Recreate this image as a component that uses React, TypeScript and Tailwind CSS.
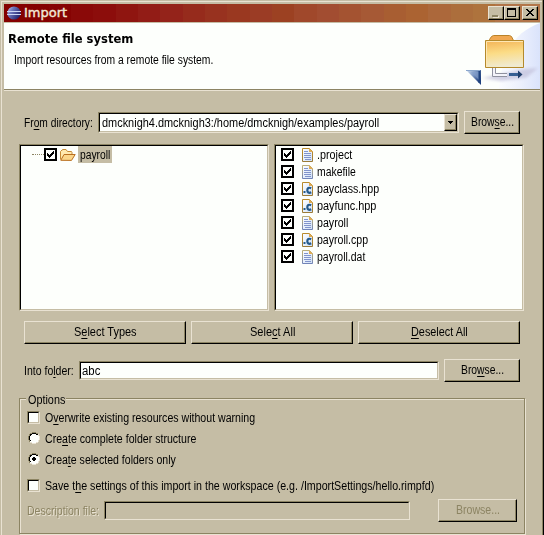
import { useLayoutEffect, useRef, type ReactNode } from "react";

const raised =
  "border border-t-[#e9e2d2] border-l-[#e9e2d2] border-r-black border-b-black shadow-[inset_-1px_-1px_0_#8c8463]";
const sunken =
  "border border-t-[#8c8463] border-l-[#8c8463] border-r-[#e9e2d2] border-b-[#e9e2d2]";
const sunkenInner =
  "h-full w-full border border-t-black border-l-black border-r-[#c5bda5] border-b-[#c5bda5]";

/** Single line of text, condensed to the given width. */
function Text({ w, className = "", children }: { w: number; className?: string; children: ReactNode }) {
  const ref = useRef<HTMLSpanElement>(null);
  useLayoutEffect(() => {
    const el = ref.current;
    if (el) el.style.transform = `scaleX(${w / el.offsetWidth})`;
  }, [w]);
  return (
    <span className={`block shrink-0 whitespace-nowrap ${className}`} style={{ width: w }}>
      <span ref={ref} className="inline-block origin-left">
        {children}
      </span>
    </span>
  );
}

function U({ children }: { children: ReactNode }) {
  return <span className="underline decoration-1 underline-offset-[2px]">{children}</span>;
}

function Button({ className, w, children }: { className: string; w: number; children: ReactNode }) {
  return (
    <button className={`flex h-[23px] shrink-0 items-center justify-center pb-px ${raised} ${className}`}>
      <Text w={w}>{children}</Text>
    </button>
  );
}

function Tick() {
  return (
    <svg className="shrink-0" width="13" height="13" viewBox="0 0 13 13" shapeRendering="crispEdges">
      <rect width="13" height="13" fill="#000" />
      <rect x="2" y="2" width="9" height="9" fill="#fdfffc" />
      <path d="M3 5h1v1h1v1h1V6h1V5h1V4h1V3h1v3H9v1H8v1H7v1H6v1H5V9H4V8H3z" fill="#000" />
    </svg>
  );
}

function Checkbox() {
  return (
    <span className={`block h-[13px] w-[13px] shrink-0 ${sunken}`}>
      <span className={`block bg-[#fdfffc] ${sunkenInner}`} />
    </span>
  );
}

function Radio({ on = false }: { on?: boolean }) {
  return (
    <svg className="shrink-0" width="12" height="12" viewBox="0 0 12 12" shapeRendering="crispEdges">
      <path d="M4 1h4v1h2v2h1v4h-1v2H8v1H4v-1H2V8H1V4h1V2h2z" fill="#fdfffc" />
      <path d="M4 0h4v1H4zM2 1h2v1H2zM8 1h2v1H8zM1 2h1v2H1zM0 4h1v4H0zM1 8h1v2H1z" fill="#8c8463" />
      <path d="M4 1h4v1H4zM2 2h2v1H2zM8 2h2v1H8zM2 3h1v1H2zM1 4h1v4H1zM2 8h1v1H2z" fill="#000" />
      <path d="M10 2h1v2h-1zM11 4h1v4h-1zM10 8h1v2h-1zM8 10h2v1H8zM4 11h4v1H4zM2 10h2v1H2z" fill="#e9e2d2" />
      {on && <path d="M5 4h2v1h1v2H7v1H5V7H4V5h1z" fill="#000" />}
    </svg>
  );
}

function FileIcon({ kind }: { kind: string }) {
  const edge = kind === "text" ? "#b9ad79" : "#b98b2d";
  const foot = kind === "text" ? "#7184b8" : "#9b7b37";
  return (
    <svg className="shrink-0" width="12" height="14" viewBox="0 0 12 14">
      <defs>
        <linearGradient id="page" x1="0" y1="0" x2="1" y2="1">
          <stop offset="0.1" stopColor="#fafcff" />
          <stop offset="1" stopColor="#cfe0f6" />
        </linearGradient>
        <linearGradient id={`edge-${kind}`} x1="0" y1="0" x2="0" y2="1">
          <stop offset="0.2" stopColor={edge} />
          <stop offset="1" stopColor={foot} />
        </linearGradient>
      </defs>
      <path d="M.5.5h7l3 3v10H.5z" fill="url(#page)" stroke={`url(#edge-${kind})`} />
      <path d="M7 0l4 4H7z" fill="#dfac55" />
      {kind === "c" ? (
        <>
          <path d="M1.500 9h2v2h-2z" fill="#235a8c" />
          <path d="M9.200 6.300C6.800 5 5.300 6.300 5.300 8.300s1.500 3.300 3.900 2" fill="none" stroke="#235a8c" strokeWidth="2.200" />
        </>
      ) : (
        <path d="M2 3.500h4M2 5.500h7M2 7.500h7M2 9.500h7M3 11.500h6" stroke="#8194cc" />
      )}
    </svg>
  );
}

function FolderIcon() {
  return (
    <svg className="shrink-0" width="16" height="12" viewBox="0 0 16 12">
      <path d="M.5 10.500v-8L2 1 3 .5h3L7.500 2.500h4l.5 1v2" fill="#ffe9ae" stroke="#c58a35" />
      <path d="M.8 11.300L4 5.500h11.200L11.500 11.400z" fill="#fbd68a" stroke="#b96f20" />
    </svg>
  );
}

function EclipseIcon() {
  return (
    <svg className="shrink-0" width="15" height="14" viewBox="0 0 15 14">
      <defs>
        <linearGradient id="ball" x1="0" y1="0" x2="1" y2="0.6">
          <stop offset="0" stopColor="#c4c9ee" />
          <stop offset="0.4" stopColor="#6a74ba" />
          <stop offset="1" stopColor="#23236e" />
        </linearGradient>
      </defs>
      <circle cx="7" cy="7" r="6.600" fill="url(#ball)" />
      <path d="M0 5.500h14M0 8.500h14" stroke="#cdd6f4" />
    </svg>
  );
}

function Banner() {
  return (
    <svg className="shrink-0" width="76" height="66" viewBox="0 0 76 66">
      <defs>
        <linearGradient id="front" x1="0" y1="0" x2="0.15" y2="1">
          <stop offset="0" stopColor="#f3b255" />
          <stop offset="0.5" stopColor="#fbdc86" />
          <stop offset="1" stopColor="#f0ead0" />
        </linearGradient>
        <linearGradient id="sky" x1="0" y1="0" x2="1" y2="0">
          <stop offset="0" stopColor="#fbfcff" />
          <stop offset="0.5" stopColor="#edf1fd" />
          <stop offset="1" stopColor="#dae3fb" />
        </linearGradient>
        <linearGradient id="wedge" x1="0" y1="0" x2="1" y2="0.6">
          <stop offset="0" stopColor="#d4e2f2" />
          <stop offset="0.55" stopColor="#7894c0" />
          <stop offset="1" stopColor="#1c3c7c" />
        </linearGradient>
        <filter id="soft">
          <feGaussianBlur stdDeviation="1.500" />
        </filter>
      </defs>
      <path d="M76 0C54 8 39 24 35 66h41z" fill="url(#sky)" />
      <path d="M18 55L60 46l14-1-12 10-25 3z" fill="#c3c2dc" opacity=".75" filter="url(#soft)" />
      <path d="M25.500 17.500v-1l2-3 2-1h16l2 1 2 4" fill="#f0a850" stroke="#b98228" />
      <path d="M21.500 17.500h38v27h-38z" fill="url(#front)" stroke="#b48a2c" />
      <path d="M22.500 44V18.500H59" fill="none" stroke="#ffe7b3" />
      <path d="M30 45v7h13" fill="none" stroke="#f3f3fa" strokeWidth="2" />
      <path d="M28.500 45v8.500H43M31.500 45v5.500H43" fill="none" stroke="#8f919f" />
      <path d="M45 51.500h10" stroke="#365f93" strokeWidth="3" />
      <path d="M54 47.500l4.500 4-4.500 4z" fill="#203f6c" />
      <path d="M2 47h15v15z" fill="url(#wedge)" />
      <path d="M7 49h8v8z" fill="#86a2cd" opacity=".65" />
      <path d="M2 47.500h14" stroke="#8aa6cc" />
      <path d="M15.500 48v12" stroke="#21447f" strokeWidth="2" />
    </svg>
  );
}

const titleSteps = [
  "bg-[#840000]", "bg-[#840000]", "bg-[#860303]", "bg-[#8a0908]", "bg-[#8c0d0b]", "bg-[#8f1510]", "bg-[#921c16]",
  "bg-[#94231a]", "bg-[#962b1c]", "bg-[#98321f]", "bg-[#9a3820]", "bg-[#9b3c25]", "bg-[#9c4122]", "bg-[#a0482b]",
  "bg-[#a24d31]", "bg-[#a45331]", "bg-[#a65935]", "bg-[#a85e32]", "bg-[#ab6332]", "bg-[#ac683b]", "bg-[#ac6e3c]",
  "bg-[#ae733d]", "bg-[#b27549]", "bg-[#b27549]",
];

const files = [
  { name: ".project", kind: "plain", w: 35 },
  { name: "makefile", kind: "text", w: 39 },
  { name: "payclass.hpp", kind: "c", w: 62 },
  { name: "payfunc.hpp", kind: "c", w: 59 },
  { name: "payroll", kind: "text", w: 31 },
  { name: "payroll.cpp", kind: "c", w: 51 },
  { name: "payroll.dat", kind: "text", w: 48 },
];

export default function App() {
  return (
    <div className="h-[535px] w-[544px] overflow-hidden border-r border-black bg-[#c5bda5] font-['Liberation_Sans',Arial,sans-serif] text-[12px] leading-[16px] text-black">
      <div className="h-full border-r border-[#8c8463] pt-px pl-px">
        <div className="h-full border-t border-l border-[#e9e2d2] pt-[2px] pr-[2px] pl-[2px]">
          <div className="relative flex h-[18px] items-center">
            <div className="absolute inset-0 flex">
              {titleSteps.map((c, i) => (
                <div key={i} className={`flex-1 ${c}`} />
              ))}
            </div>
            <div className="relative flex w-full items-center pl-[3px]">
              <EclipseIcon />
              <Text w={43} className="ml-[2px] font-['DejaVu_Sans',sans-serif] text-[13px] text-[#f1e8d6] [-webkit-text-stroke:0.4px_#f1e8d6]">
                Import
              </Text>
              <div className="ml-auto flex pr-[2px]">
                <div className={`flex h-[14px] w-4 items-end bg-[#c5bda5] pb-[2px] pl-[3px] ${raised}`}>
                  <div className="h-[2px] w-[6px] bg-[#8c8463] shadow-[1px_1px_0_#e9e2d2]" />
                </div>
                <div className={`flex h-[14px] w-4 items-center justify-center bg-[#c5bda5] pr-px pb-px ${raised}`}>
                  <div className="h-[9px] w-[9px] border border-t-2 border-black" />
                </div>
                <div className={`ml-[2px] flex h-[14px] w-4 items-center justify-center bg-[#c5bda5] pr-px pb-px ${raised}`}>
                  <svg width="8" height="7" viewBox="0 0 8 7" shapeRendering="crispEdges">
                    <path d="M0 0h2v1h1v1h2V1h1V0h2v1H7v1H6v1H5v1h1v1h1v1h1v1H6V6H5V5H3v1H2v1H0V6h1V5h1V4h1V3H2V2H1V1H0z" />
                  </svg>
                </div>
              </div>
            </div>
          </div>

          <header className="mt-px flex h-[67px] justify-between border-b border-[#8c8463] bg-[#fdfffc] shadow-[0_1px_0_#e9e2d2]">
            <div className="pt-[8px] pl-1">
              <Text w={125} className="font-['DejaVu_Sans',sans-serif] text-[12.500px] font-bold">
                Remote file system
              </Text>
              <Text w={199} className="mt-[5px] ml-[6px]">
                Import resources from a remote file system.
              </Text>
            </div>
            <Banner />
          </header>

          <main className="pl-[15px]">
            <div className="mt-[21px] flex h-[23px] items-center pl-[5px]">
              <Text w={69}>
                Fr<U>o</U>m directory:
              </Text>
              <div className={`ml-[5px] h-[21px] w-[361px] ${sunken}`}>
                <div className={`flex items-center bg-[#fdfffc] pl-[2px] ${sunkenInner}`}>
                  <Text w={277}>dmcknigh4.dmcknigh3:/home/dmcknigh/examples/payroll</Text>
                  <div className={`ml-auto flex h-full w-[13px] items-center justify-center bg-[#c5bda5] ${raised}`}>
                    <svg width="5" height="3" viewBox="0 0 5 3" shapeRendering="crispEdges">
                      <path d="M0 0h5v1H4v1H3v1H2V2H1V1H0z" />
                    </svg>
                  </div>
                </div>
              </div>
              <Button className="ml-[5px] w-[56px]" w={43}>
                Brow<U>s</U>e...
              </Button>
            </div>

            <div className="mt-[10px] flex gap-[5px]">
              <div className={`h-[167px] w-[250px] ${sunken}`}>
                <div className={`bg-[#fdfffc] ${sunkenInner}`}>
                  <div className="flex h-[17px] items-center pl-[11px]">
                    <div className="w-3 border-t border-dotted border-[#8c8463]" />
                    <Tick />
                    <div className="ml-[3px] flex">
                      <FolderIcon />
                    </div>
                    <div className="ml-[2px] flex h-[17px] items-center bg-[#c5bda5] px-[2px]">
                      <Text w={30}>payroll</Text>
                    </div>
                  </div>
                </div>
              </div>
              <div className={`h-[167px] w-[250px] ${sunken}`}>
                <div className={`bg-[#fdfffc] ${sunkenInner}`}>
                  {files.map((f) => (
                    <div key={f.name} className="flex h-[17px] items-center pl-[5px]">
                      <Tick />
                      <div className="mr-[3px] ml-2 flex">
                        <FileIcon kind={f.kind} />
                      </div>
                      <Text w={f.w}>{f.name}</Text>
                    </div>
                  ))}
                </div>
              </div>
            </div>

            <div className="mt-[10px] flex gap-[5px] pl-[5px]">
              <Button className="w-[162px]" w={63}>
                S<U>e</U>lect Types
              </Button>
              <Button className="w-[162px]" w={45}>
                Sele<U>c</U>t All
              </Button>
              <Button className="w-[162px]" w={57}>
                <U>D</U>eselect All
              </Button>
            </div>

            <div className="mt-[15px] flex h-[23px] items-center pl-[5px]">
              <Text w={50}>
                Into fo<U>l</U>der:
              </Text>
              <div className={`ml-[5px] h-[19px] w-[360px] ${sunken}`}>
                <div className={`flex items-center bg-[#fdfffc] pl-px ${sunkenInner}`}>
                  <Text w={18}>abc</Text>
                </div>
              </div>
              <Button className="ml-[5px] w-[76px]" w={43}>
                Bro<U>w</U>se...
              </Button>
            </div>

            <fieldset className="mt-[16px] h-[136px] w-[506px] border border-[#8c8463] shadow-[inset_1px_1px_0_#e9e2d2,1px_1px_0_#e9e2d2]">
              <div className="-mt-[7px] ml-[6px] h-[16px] w-[40px] bg-[#c5bda5] pl-[2px]">
                <Text w={37}>Options</Text>
              </div>
              <div className="mt-[3px] flex h-[13px] items-center gap-[5px] pl-[7px]">
                <Checkbox />
                <Text w={210}>
                  O<U>v</U>erwrite existing resources without warning
                </Text>
              </div>
              <div className="mt-[8px] flex h-[12px] items-center gap-[5px] pl-[8px]">
                <Radio />
                <Text w={151} className="pt-px">
                  Cre<U>a</U>te complete folder structure
                </Text>
              </div>
              <div className="mt-[9px] flex h-[12px] items-center gap-[5px] pl-[8px]">
                <Radio on />
                <Text w={131} className="pt-px">
                  Crea<U>t</U>e selected folders only
                </Text>
              </div>
              <div className="mt-[14px] flex h-[13px] items-center gap-[5px] pl-[7px]">
                <Checkbox />
                <Text w={389}>
                  Save t<U>h</U>e settings of this import in the workspace (e.g. /ImportSettings/hello.rimpfd)
                </Text>
              </div>
              <div className="mt-[7px] flex h-[23px] items-center pl-[7px] text-[#8c8463] [text-shadow:1px_1px_0_#e9e2d2]">
                <Text w={72}>Description file:</Text>
                <div className={`ml-[5px] h-[19px] w-[306px] ${sunken}`}>
                  <div className={sunkenInner} />
                </div>
                <Button className="ml-[28px] w-[79px]" w={44}>
                  Browse...
                </Button>
              </div>
            </fieldset>
          </main>
        </div>
      </div>
    </div>
  );
}
